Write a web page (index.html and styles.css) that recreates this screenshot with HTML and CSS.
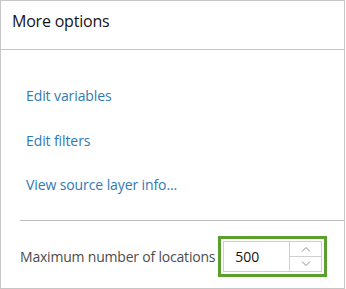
FILE: index.html
```html
<!DOCTYPE html>
<html lang="en">
<head>
<meta charset="utf-8">
<title>More options</title>
<link rel="stylesheet" href="styles.css">
</head>
<body>
<div class="panel">
  <div class="header"><h2 class="title">More options</h2></div>
  <div class="body">
    <ul class="links">
      <li><a class="link" href="#">Edit variables</a></li>
      <li><a class="link" href="#">Edit filters</a></li>
      <li><a class="link" href="#">View source layer info...</a></li>
    </ul>
    <div class="divider"></div>
    <div class="row">
      <span class="label">Maximum number of locations</span>
      <div class="focus">
        <div class="input">
          <span class="value">500</span>
          <div class="spin">
            <span class="spin-btn"><svg width="10" height="6" viewBox="0 0 10 6"><path d="M1 5.5 L5 1.5 L9 5.5" fill="none" stroke="#8c8c8c" stroke-width="1"/></svg></span>
            <span class="spin-btn"><svg width="10" height="6" viewBox="0 0 10 6"><path d="M1 0.5 L5 4.5 L9 0.5" fill="none" stroke="#8c8c8c" stroke-width="1"/></svg></span>
          </div>
        </div>
      </div>
    </div>
  </div>
</div>
</body>
</html>
```
FILE: styles.css
```css
html, body {
  margin: 0;
  padding: 0;
  background: #ffffff;
}
body {
  font-family: "Open Sans", "Liberation Sans", sans-serif;
}
.panel {
  box-sizing: border-box;
  width: 345px;
  height: 289px;
  border: 1px solid #c6c6c6;
  display: flex;
  flex-direction: column;
}
.header {
  box-sizing: border-box;
  height: 49px;
  border-bottom: 1px solid #c6c6c6;
  padding: 10px 0 0 11px;
}
.title {
  margin: 0;
  font-size: 16px;
  line-height: 20px;
  font-weight: 400;
  color: #151515;
  letter-spacing: -0.2px;
}
.body {
  flex: 1;
}
.links {
  list-style: none;
  margin: 0;
  padding: 36px 0 0 25px;
  display: flex;
  flex-direction: column;
  align-items: flex-start;
  gap: 24.5px;
}
.links li {
  display: block;
}
.link {
  display: block;
  font-size: 14px;
  line-height: 20px;
  color: #2f79b5;
  text-decoration: none;
  letter-spacing: -0.1px;
}
.divider {
  margin: 25px 0 0 19px;
  height: 1px;
  background: #bdbdbd;
}
.row {
  display: flex;
  align-items: center;
  padding: 15px 0 0 19px;
}
.label {
  font-size: 14px;
  line-height: 20px;
  color: #4c4c4c;
  margin-right: 3px;
  letter-spacing: -0.2px;
}
.focus {
  border: 3px solid #5ba02c;
  padding: 2px;
  background: #fff;
}
.input {
  display: flex;
  width: 99px;
  height: 31px;
  box-sizing: border-box;
  border: 1px solid #cfcfcf;
}
.value {
  flex: 1;
  font-size: 14px;
  line-height: 29px;
  color: #151515;
  padding-left: 11px;
}
.spin {
  width: 31px;
  border-left: 1px solid #cfcfcf;
  display: flex;
  flex-direction: column;
}
.spin-btn {
  flex: 1;
  display: flex;
  align-items: center;
  justify-content: center;
}
.spin-btn + .spin-btn {
  border-top: 1px solid #cfcfcf;
}
.spin-btn svg {
  display: block;
}
```
